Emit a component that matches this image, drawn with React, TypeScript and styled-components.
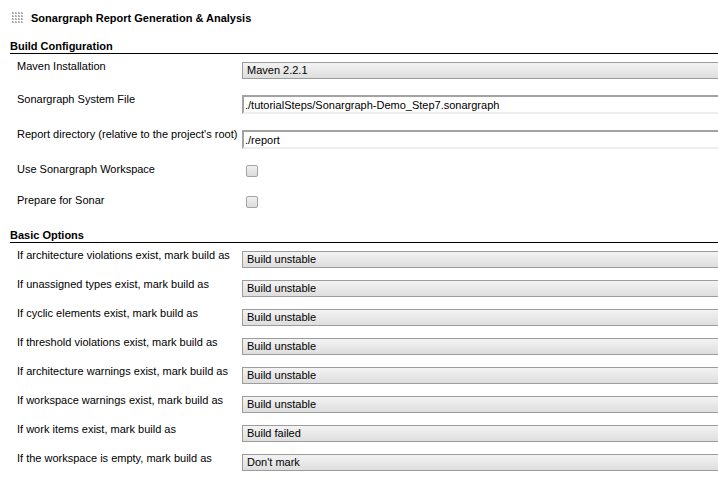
import React from "react";
import styled, { createGlobalStyle } from "styled-components";

const GlobalStyle = createGlobalStyle`
  html, body {
    margin: 0;
    padding: 0;
    background: #ffffff;
    overflow: hidden;
  }
  body {
    font-family: "Liberation Sans", Arial, Helvetica, sans-serif;
    font-size: 11px;
    color: #000000;
  }
`;

const Page = styled.div`
  width: 718px;
  height: 484px;
  overflow: hidden;
`;

const TitleBar = styled.div`
  display: flex;
  align-items: center;
  padding: 11px 0 0 12px;
  height: 14px;
  gap: 7px;
`;

const Title = styled.div`
  font-weight: bold;
  font-size: 11px;
  line-height: 14px;
`;

const SectionBlock = styled.section<{ $top: number }>`
  margin-top: ${(p) => p.$top}px;
`;

const Heading = styled.div`
  margin-left: 10px;
  font-weight: bold;
  font-size: 11px;
  line-height: 14px;
  border-bottom: 1px solid #000000;
`;

const Rows = styled.div`
  padding-top: 5px;
`;

const Row = styled.div<{ $gap: number }>`
  display: grid;
  grid-template-columns: 225px 1fr;
  align-items: start;
  padding-left: 17px;
  padding-bottom: ${(p) => p.$gap}px;
`;

const Label = styled.div`
  line-height: 14px;
  white-space: nowrap;
`;

const Control = styled.div`
  padding-top: 3px;
  display: flex;
  overflow: visible;
`;

const Select = styled.select`
  appearance: none;
  -webkit-appearance: none;
  box-sizing: border-box;
  width: 520px;
  height: 17px;
  margin: 0;
  padding: 0 0 0 4px;
  border: 1px solid #9c9c9c;
  border-radius: 0;
  background: linear-gradient(#f3f3f3, #dedede);
  font-family: "Liberation Sans", Arial, Helvetica, sans-serif;
  font-size: 11px;
  line-height: 15px;
  color: #000000;
  outline: none;
`;

const TextInput = styled.input`
  box-sizing: border-box;
  width: 520px;
  height: 19px;
  margin: 0;
  padding: 0 0 0 1px;
  border-style: solid;
  border-width: 2px 0 2px 2px;
  border-color: #a3a3a3 transparent #eeeeee #a3a3a3;
  border-radius: 0;
  background: #ffffff;
  font-family: "Liberation Sans", Arial, Helvetica, sans-serif;
  font-size: 11px;
  color: #000000;
  outline: none;
`;

const Checkbox = styled.input.attrs({ type: "checkbox" })`
  appearance: none;
  -webkit-appearance: none;
  box-sizing: border-box;
  width: 12px;
  height: 12px;
  margin: 0 0 3px 4px;
  border: 1px solid #a4a4a4;
  border-radius: 2px;
  background: linear-gradient(#f0f0f0, #dcdcdc);
`;

const Grip = () => (
  <svg width="12" height="12" viewBox="0 0 12 12">
    {[0, 1, 2, 3].map((r) =>
      [0, 1, 2, 3].map((c) => (
        <g key={`${r}-${c}`}>
          <rect x={c * 3} y={r * 3} width="2" height="2" fill="#dcdcdc" />
          <rect x={c * 3} y={r * 3 + 1} width="2" height="1" fill="#a8a8a8" />
          <rect x={c * 3} y={r * 3} width="1" height="2" fill="#a8a8a8" />
        </g>
      ))
    )}
  </svg>
);

type SelectRow = { label: string; value: string };

const basicOptions: SelectRow[] = [
  { label: "If architecture violations exist, mark build as", value: "Build unstable" },
  { label: "If unassigned types exist, mark build as", value: "Build unstable" },
  { label: "If cyclic elements exist, mark build as", value: "Build unstable" },
  { label: "If threshold violations exist, mark build as", value: "Build unstable" },
  { label: "If architecture warnings exist, mark build as", value: "Build unstable" },
  { label: "If workspace warnings exist, mark build as", value: "Build unstable" },
  { label: "If work items exist, mark build as", value: "Build failed" },
  { label: "If the workspace is empty, mark build as", value: "Don't mark" },
];

const markOptions = ["Build unstable", "Build failed", "Don't mark"];

export default function App() {
  return (
    <Page>
      <GlobalStyle />
      <TitleBar>
        <Grip />
        <Title>Sonargraph Report Generation &amp; Analysis</Title>
      </TitleBar>

      <SectionBlock $top={14}>
        <Heading>Build Configuration</Heading>
        <Rows>
          <Row $gap={13}>
            <Label>Maven Installation</Label>
            <Control>
              <Select defaultValue="Maven 2.2.1">
                <option>Maven 2.2.1</option>
              </Select>
            </Control>
          </Row>
          <Row $gap={13}>
            <Label>Sonargraph System File</Label>
            <Control>
              <TextInput defaultValue="./tutorialSteps/Sonargraph-Demo_Step7.sonargraph" />
            </Control>
          </Row>
          <Row $gap={13}>
            <Label>Report directory (relative to the project's root)</Label>
            <Control>
              <TextInput defaultValue="./report" />
            </Control>
          </Row>
          <Row $gap={13}>
            <Label>Use Sonargraph Workspace</Label>
            <Control>
              <Checkbox />
            </Control>
          </Row>
          <Row $gap={13}>
            <Label>Prepare for Sonar</Label>
            <Control>
              <Checkbox />
            </Control>
          </Row>
        </Rows>
      </SectionBlock>

      <SectionBlock $top={4}>
        <Heading>Basic Options</Heading>
        <Rows>
          {basicOptions.map((o) => (
            <Row $gap={9} key={o.label}>
              <Label>{o.label}</Label>
              <Control>
                <Select defaultValue={o.value}>
                  {markOptions.map((m) => (
                    <option key={m}>{m}</option>
                  ))}
                </Select>
              </Control>
            </Row>
          ))}
        </Rows>
      </SectionBlock>
    </Page>
  );
}
